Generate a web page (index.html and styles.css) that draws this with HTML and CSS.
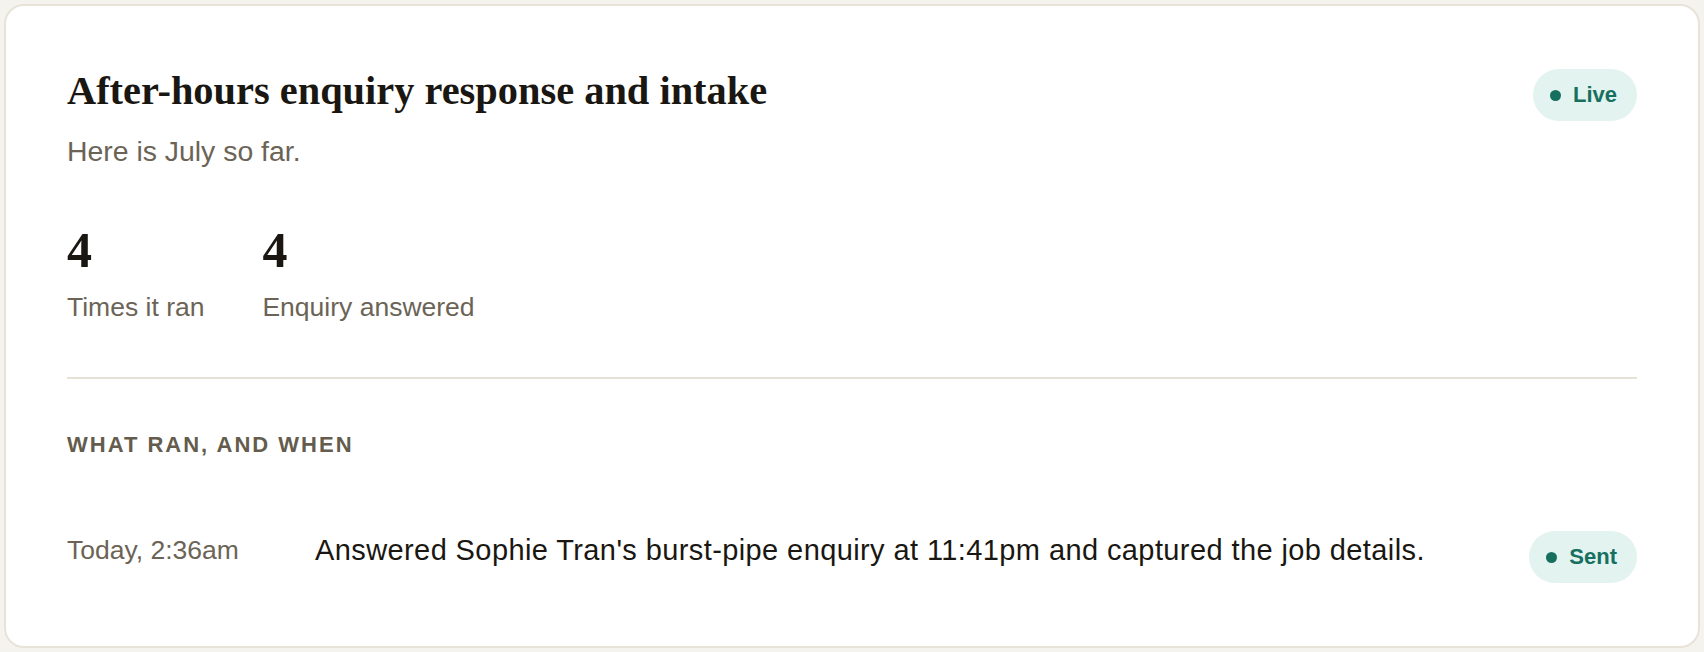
FILE: index.html
```html
<!DOCTYPE html>
<html lang="en">
<head>
    <meta charset="UTF-8">
    <meta name="viewport" content="width=device-width, initial-scale=1.0">
    <title>After-hours enquiry response and intake</title>
    <link rel="stylesheet" href="styles.css">
</head>
<body>
    <div class="card">
        <div class="card-head">
            <div>
                <h1 class="title">After-hours enquiry response and intake</h1>
                <p class="sub">Here is July so far.</p>
            </div>
            <span class="pill"><span class="dot"></span>Live</span>
        </div>

        <div class="stats">
            <div class="stat">
                <div class="num">4</div>
                <div class="lbl">Times it ran</div>
            </div>
            <div class="stat">
                <div class="num">4</div>
                <div class="lbl">Enquiry answered</div>
            </div>
        </div>

        <h2 class="section">What ran, and when</h2>

        <div class="run">
            <div class="when">Today, 2:36am</div>
            <div class="what">Answered Sophie Tran's burst-pipe enquiry at 11:41pm and captured the job details.</div>
            <span class="pill"><span class="dot"></span>Sent</span>
        </div>
    </div>
</body>
</html>
```

FILE: styles.css
```css
*{
    box-sizing: border-box;
}

body{
    margin: 0;
    padding: 4px;
    background-color: #f5f3ee;
    font-family: 'Liberation Sans', Arial, sans-serif;
    color: #1a1712;
}

.card{
    background-color: white;
    border: 2px solid #e8e3d8;
    border-radius: 20px;
    padding: 63px 61px;
}

.card-head{
    display: flex;
    justify-content: space-between;
    align-items: flex-start;
}

.title{
    margin: 0;
    font-family: 'Liberation Serif', 'Times New Roman', serif;
    font-weight: bold;
    font-size: 40.4px;
    line-height: 43px;
    color: #1a1712;
}

.sub{
    margin: 21px 0 0;
    font-size: 28.4px;
    line-height: 37px;
    color: #6b6456;
}

.pill{
    display: inline-flex;
    align-items: center;
    gap: 12px;
    padding: 13px 20px 13px 17px;
    border-radius: 30px;
    background-color: #e3f3ef;
    color: #17705f;
    font-size: 22px;
    line-height: 26px;
    font-weight: bold;
    flex-shrink: 0;
}

.dot{
    width: 11px;
    height: 11px;
    border-radius: 50%;
    background-color: #17705f;
}

.stats{
    display: flex;
    gap: 58px;
    margin-top: 51px;
    padding-bottom: 50px;
    border-bottom: 2px solid #e5e1d6;
}

.num{
    font-family: 'Liberation Serif', 'Times New Roman', serif;
    font-weight: bold;
    font-size: 50px;
    line-height: 59px;
    color: #1a1712;
}

.lbl{
    margin-top: 8px;
    font-size: 26.5px;
    line-height: 39px;
    color: #6b6456;
}

.section{
    margin: 52px 0 0;
    font-size: 22px;
    line-height: 28px;
    font-weight: bold;
    letter-spacing: 2px;
    text-transform: uppercase;
    color: #645c4c;
}

.run{
    display: flex;
    align-items: flex-start;
    margin-top: 72px;
}

.when{
    flex: 0 0 248px;
    font-size: 26.5px;
    line-height: 39px;
    color: #6b6456;
}

.what{
    flex: 1;
    font-size: 29px;
    line-height: 39px;
    letter-spacing: 0.4px;
    color: #1a1712;
}

.run .pill{
    margin-left: 24px;
}
```
